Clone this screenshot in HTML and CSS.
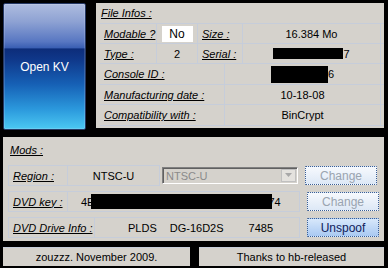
FILE: index.html
```html
<!DOCTYPE html>
<html lang="en">
<head>
    <meta charset="UTF-8">
    <title>Open KV</title>
    <link rel="stylesheet" href="styles.css">
</head>
<body>
    <div class="app">
        <div class="top-row">
            <button class="open-btn">Open KV</button>

            <div class="panel file-infos">
                <div class="title">File Infos :</div>
                <div class="row">
                    <div class="cell lbl w57">Modable ?</div>
                    <div class="cell val w41"><span class="white-box">No</span></div>
                    <div class="cell lbl w45">Size :</div>
                    <div class="cell val grow">16.384 Mo</div>
                </div>
                <div class="row">
                    <div class="cell lbl w57">Type :</div>
                    <div class="cell val w41">2</div>
                    <div class="cell lbl w45">Serial :</div>
                    <div class="cell val grow"><span class="redact serial"></span>7</div>
                </div>
                <div class="row tall">
                    <div class="cell lbl w125">Console ID :</div>
                    <div class="cell val grow"><span class="redact console"></span>6</div>
                </div>
                <div class="row">
                    <div class="cell lbl w125">Manufacturing date :</div>
                    <div class="cell val grow">10-18-08</div>
                </div>
                <div class="row tall last">
                    <div class="cell lbl w125">Compatibility with :</div>
                    <div class="cell val grow">BinCrypt</div>
                </div>
            </div>
        </div>

        <div class="panel mods">
            <div class="title">Mods :</div>
            <div class="mod-row">
                <div class="cell lbl w60">Region :</div>
                <div class="cell val w92">NTSC-U</div>
                <div class="combo">
                    <span class="combo-text">NTSC-U</span>
                    <span class="combo-arrow"><svg width="9" height="5" viewBox="0 0 9 5"><path d="M1 0h7L4.5 4z" fill="#a8a8a8"/></svg></span>
                </div>
                <button class="xp-btn disabled">Change</button>
            </div>
            <div class="mod-row">
                <div class="cell lbl w60">DVD key :</div>
                <div class="cell val key w232">4E<span class="redact dvdkey"></span>74</div>
                <button class="xp-btn disabled">Change</button>
            </div>
            <div class="mod-row">
                <div class="cell lbl w87">DVD Drive Info :</div>
                <div class="cell val drive w205">
                    <span class="d1">PLDS</span><span class="d2">DG-16D2S</span><span class="d3">7485</span>
                </div>
                <button class="xp-btn active">Unspoof</button>
            </div>
        </div>

        <div class="status">
            <div class="panel status-left">zouzzz. November 2009.</div>
            <div class="panel status-right">Thanks to hb-released</div>
        </div>
    </div>
</body>
</html>
```

FILE: styles.css
```css
body {
    margin: 0;
    background-color: #000;
    font-family: "Liberation Sans", Arial, sans-serif;
    font-size: 11px;
    color: #000;
    width: 388px;
    height: 268px;
    overflow: hidden;
}

.app {
    padding: 3px 0 0 3px;
}

.top-row {
    display: flex;
    align-items: flex-start;
}

.panel {
    background-color: #d5d2cc;
    box-sizing: border-box;
}

/* big blue button */
.open-btn {
    width: 83px;
    height: 127px;
    border: 1px solid #243763;
    border-radius: 2px;
    background: linear-gradient(to bottom,
        #aebcdf 0%, #8ea2d3 14%, #5877c2 30%, #3a5fb3 35%,
        #0d2d7a 36%, #0f3789 44%, #1660b5 64%, #2b98dc 84%, #4bc8f2 100%);
    color: #fff;
    font-family: "Liberation Sans", Arial, sans-serif;
    font-size: 12px;
    padding: 0;
    box-shadow: inset 0 0 0 1px rgba(255, 255, 255, 0.15);
}

.file-infos {
    margin-left: 10px;
    width: 288px;
    height: 125px;
    padding: 3px 0 0 4px;
}

.title {
    font-style: italic;
    text-decoration: underline;
    line-height: 14px;
    padding-left: 1px;
}

.file-infos .title {
    margin-bottom: 3px;
}

.row {
    display: flex;
    height: 19px;
    border-top: 1px solid #c6cdda;
}

.row.tall {
    height: 20px;
}

.row.last {
    border-bottom: 1px solid #c6cdda;
}

.cell {
    display: flex;
    align-items: center;
    box-sizing: border-box;
    height: 100%;
    border-right: 1px solid #c6cdda;
    white-space: nowrap;
}

.lbl {
    font-style: italic;
    text-decoration: underline;
    padding-left: 4px;
}

.val {
    justify-content: center;
}

.w57 { width: 57px; }
.w41 { width: 41px; }
.w45 { width: 45px; }
.w125 { width: 125px; }
.w60 { width: 60px; }
.w92 { width: 92px; }
.w87 { width: 87px; }
.w232 { width: 232px; }
.w205 { width: 205px; }
.grow { width: 138px; }
.w125 + .grow { width: 156px; }

.white-box {
    background-color: #fff;
    width: 31px;
    height: 16px;
    display: flex;
    align-items: center;
    justify-content: center;
    font-size: 12px;
}

.redact {
    display: inline-block;
    background-color: #000;
}

.redact.serial {
    width: 70px;
    height: 11px;
}

.redact.console {
    width: 57px;
    height: 17px;
}

.redact.dvdkey {
    width: 181px;
    height: 15px;
    margin-left: -3px;
    margin-right: -4px;
}

/* mods */
.mods {
    margin-top: 7px;
    width: 381px;
    height: 104px;
    padding: 6px 0 0 5px;
}

.mods .title {
    margin-bottom: 8px;
    padding-left: 2px;
}

.mod-row {
    display: flex;
    align-items: center;
    height: 21px;
    margin-bottom: 5px;
}

.mod-row .cell {
    border: 1px solid #c6cdda;
    border-left: none;
}

.mod-row .cell.lbl {
    border-left: 1px solid #c6cdda;
}

.val.key {
    justify-content: flex-start;
    padding-left: 13px;
}

.val.drive {
    justify-content: flex-start;
}

.d1 { margin-left: 33px; }
.d2 { margin-left: 13px; }
.d3 { margin-left: 25px; }

.combo {
    margin-left: 2px;
    width: 136px;
    height: 17px;
    box-sizing: border-box;
    border: 1px solid;
    border-color: #808080 #fff #fff #808080;
    box-shadow: inset 1px 1px 0 #606060;
    display: flex;
    align-items: center;
    justify-content: space-between;
}

.combo-text {
    color: #8a8a8a;
    padding-left: 3px;
}

.combo-arrow {
    width: 15px;
    height: 13px;
    margin-right: 1px;
    background-color: #e4e2de;
    border: 1px solid #c0c0c0;
    box-sizing: border-box;
    display: flex;
    align-items: center;
    justify-content: center;
}

.xp-btn {
    margin-left: 7px;
    width: 72px;
    height: 19px;
    padding: 0;
    font-family: "Liberation Sans", Arial, sans-serif;
    font-size: 12px;
    border: 1px dotted #3b5f96;
    border-radius: 1px;
}

.xp-btn.disabled {
    color: #9aa4b0;
    background: linear-gradient(to bottom, #f6f9fd, #dde8f6);
}

.xp-btn.active {
    color: #10205a;
    background: linear-gradient(to bottom, #d8e8fb, #a9c9f2);
}

/* status bar */
.status {
    display: flex;
    margin-top: 6px;
}

.status-left,
.status-right {
    height: 19px;
    display: flex;
    align-items: center;
    justify-content: center;
    border-top: 1px solid #c6cdda;
}

.status-left {
    width: 187px;
}

.status-right {
    width: 185px;
    margin-left: 9px;
}
```
